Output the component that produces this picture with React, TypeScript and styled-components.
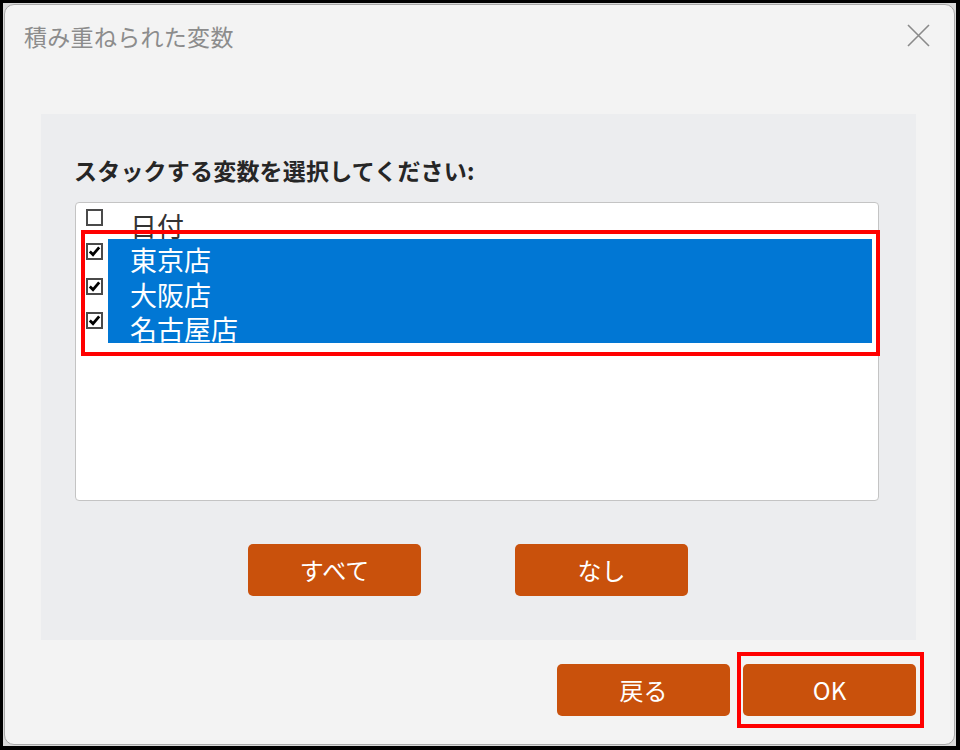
import React from "react";
import styled, { createGlobalStyle } from "styled-components";

const Global = createGlobalStyle`
  html, body { margin: 0; padding: 0; background: #000; }
  body { width: 960px; height: 750px; overflow: hidden; }
  * { box-sizing: border-box; }
`;

const FONT = `"Noto Sans CJK JP", "Noto Sans", sans-serif`;

const Frame = styled.div`
  width: 960px;
  height: 750px;
  padding: 3px 4px 4px 3px;
  background: #000;
`;

const Backdrop = styled.div`
  width: 100%;
  height: 100%;
  padding: 1px;
  background: #d9d9d9;
`;

const Window = styled.div`
  width: 100%;
  height: 100%;
  background: #f3f3f3;
  border: 1px solid #a9a9a9;
  border-radius: 10px;
  display: flex;
  flex-direction: column;
  font-family: ${FONT};
  overflow: hidden;
`;

const TitleBar = styled.div`
  height: 63px;
  flex: none;
  display: flex;
  align-items: center;
  justify-content: space-between;
  padding: 0 24px 2px 19px;
`;

const Title = styled.div`
  font-size: 23px;
  color: #8c8c8c;
  letter-spacing: 0.3px;
`;

const CloseButton = styled.div`
  width: 24px;
  height: 24px;
  display: flex;
  align-items: center;
  justify-content: center;
`;

const Panel = styled.div`
  margin: 46px 38px 0 36px;
  height: 526px;
  background: #ecedef;
  padding: 41px 0 0 33px;
  display: flex;
  flex-direction: column;
`;

const Prompt = styled.div`
  font-size: 23px;
  font-weight: 700;
  line-height: 30px;
  color: #262626;
  letter-spacing: 0.2px;
`;

const ListBox = styled.div`
  position: relative;
  margin: 17px 0 0 1px;
  width: 804px;
  height: 299px;
  background: #fff;
  border: 1px solid #c4c4c4;
  border-radius: 4px;
  padding-top: 1.5px;
`;

const Row = styled.div`
  display: flex;
  align-items: flex-start;
  height: 34.5px;
`;

const Box = styled.div`
  flex: none;
  width: 17px;
  height: 17px;
  margin: 4px 5px 0 10px;
  border: 2px solid #4a4a4a;
  background: #fff;
  display: flex;
  align-items: center;
  justify-content: center;
`;

const ItemText = styled.div<{ $selected: boolean }>`
  flex: 1;
  height: 100%;
  margin-right: 6px;
  overflow: hidden;
  padding-left: 22px;
  font-size: 27px;
  line-height: 42px;
  white-space: nowrap;
  color: ${(p) => (p.$selected ? "#ffffff" : "#333333")};
  background: ${(p) => (p.$selected ? "#0177d4" : "transparent")};
`;

const RedMark = styled.div`
  position: absolute;
  border: 4px solid #ff0000;
  pointer-events: none;
`;

const ListMark = styled(RedMark)`
  left: 5px;
  top: 27px;
  width: 799px;
  height: 126px;
`;

const ButtonRow = styled.div`
  display: flex;
  gap: 94px;
  margin: 43px 0 0 174px;
`;

const Button = styled.button`
  width: 173px;
  height: 52px;
  border: none;
  border-radius: 5px;
  background: #c9510c;
  color: #fff;
  font-family: ${FONT};
  font-size: 24px;
  padding: 0 0 2px;
  display: flex;
  align-items: center;
  justify-content: center;
  cursor: pointer;
`;

const Footer = styled.div`
  display: flex;
  justify-content: flex-end;
  gap: 13px;
  margin: 24px 38px 0 0;
`;

const Marked = styled.div`
  position: relative;
`;

const ButtonMark = styled(RedMark)`
  inset: -12px -8px -12px -6px;
`;

const Check = () => (
  <svg width="13" height="13" viewBox="0 0 13 13">
    <path d="M1.8 6.5 L5 9.6 L11.2 2.4" fill="none" stroke="#000" strokeWidth="2.8" />
  </svg>
);

const items = [
  { label: "日付", checked: false },
  { label: "東京店", checked: true },
  { label: "大阪店", checked: true },
  { label: "名古屋店", checked: true },
];

export default function App() {
  return (
    <>
      <Global />
      <Frame>
        <Backdrop>
          <Window>
            <TitleBar>
              <Title>積み重ねられた変数</Title>
              <CloseButton>
                <svg width="23" height="23" viewBox="0 0 23 23">
                  <path d="M1 1 L22 22 M22 1 L1 22" stroke="#8a8a8a" strokeWidth="1.6" fill="none" />
                </svg>
              </CloseButton>
            </TitleBar>
            <Panel>
              <Prompt>スタックする変数を選択してください:</Prompt>
              <ListBox>
                {items.map((it) => (
                  <Row key={it.label}>
                    <Box>{it.checked && <Check />}</Box>
                    <ItemText $selected={it.checked}>{it.label}</ItemText>
                  </Row>
                ))}
                <ListMark />
              </ListBox>
              <ButtonRow>
                <Button>すべて</Button>
                <Button>なし</Button>
              </ButtonRow>
            </Panel>
            <Footer>
              <Button>戻る</Button>
              <Marked>
                <Button>OK</Button>
                <ButtonMark />
              </Marked>
            </Footer>
          </Window>
        </Backdrop>
      </Frame>
    </>
  );
}
